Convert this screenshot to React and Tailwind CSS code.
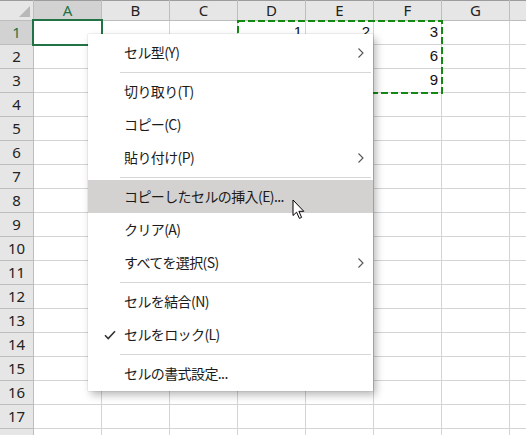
import { Fragment } from 'react'

const COLS = ['A', 'B', 'C', 'D', 'E', 'F', 'G', 'H']
const ROW_COUNT = 18

const DATA = {
  D1: 1, E1: 2, F1: 3,
  D2: 4, E2: 5, F2: 6,
  D3: 7, E3: 8, F3: 9,
}

const MENU = [
  { label: 'セル型(Y)', sub: true },
  'sep',
  { label: '切り取り(T)' },
  { label: 'コピー(C)' },
  { label: '貼り付け(P)', sub: true },
  'sep',
  { label: 'コピーしたセルの挿入(E)...', hover: true },
  { label: 'クリア(A)' },
  { label: 'すべてを選択(S)', sub: true },
  'sep',
  { label: 'セルを結合(N)' },
  { label: 'セルをロック(L)', checked: true },
  'sep',
  { label: 'セルの書式設定...' },
]

const uiFont = { fontFamily: '"Noto Sans", "Open Sans", sans-serif' }
const menuFont = { fontFamily: '"Noto Sans CJK JP", "Noto Sans", sans-serif' }

function Chevron() {
  return (
    <svg width="8" height="12" viewBox="0 0 8 12" className="text-[#555]">
      <path d="M1.5 1.5 L6 6 L1.5 10.5" fill="none" stroke="currentColor" strokeWidth="1.1" />
    </svg>
  )
}

function Check() {
  return (
    <svg width="12" height="10" viewBox="0 0 12 10" className="text-[#333]">
      <path d="M1 5.2 L4.2 8.5 L11 1.2" fill="none" stroke="currentColor" strokeWidth="1.6" />
    </svg>
  )
}

function ContextMenu() {
  return (
    <div
      className="absolute left-[88px] top-[34px] w-[285px] h-[357px] bg-white pt-[2px] pb-[1px] shadow-[0_0_1px_rgba(0,0,0,0.25),3px_4px_8px_rgba(0,0,0,0.28)] text-[14px] text-[#1b1b1b]"
      style={menuFont}
    >
      {MENU.map((item, i) => {
        if (item === 'sep') {
          return (
            <div key={i} className="h-[6px] flex items-center pl-[32px] pr-[2px]">
              <div className="h-px w-full bg-[#d7d7d7]" />
            </div>
          )
        }
        return (
          <div
            key={i}
            className={
              'h-[33px] flex items-center' + (item.hover ? ' bg-[#d3d2d0]' : '')
            }
          >
            <div className="w-[36px] flex justify-center pl-[8px]">{item.checked && <Check />}</div>
            <div className="flex-1 whitespace-nowrap tracking-[-0.6px]">{item.label}</div>
            <div className="w-[24px] flex justify-center">{item.sub && <Chevron />}</div>
          </div>
        )
      })}
    </div>
  )
}

function Cursor() {
  return (
    <svg className="absolute left-[292px] top-[199px]" width="14" height="21" viewBox="0 0 14 21">
      <path
        d="M1 1 L1 16.5 L4.6 13.2 L7.4 19.4 L9.6 18.4 L6.9 12.3 L11.8 12.3 Z"
        fill="#fff"
        stroke="#000"
        strokeWidth="1"
        strokeLinejoin="round"
      />
    </svg>
  )
}

function Marquee() {
  // copy marquee around D1:F3
  return (
    <svg className="absolute left-[237px] top-[20px]" width="206" height="74" viewBox="0 0 206 74">
      <rect x="1" y="1" width="204" height="72" fill="none" stroke="#128a12" strokeWidth="2" strokeDasharray="7 3" />
    </svg>
  )
}

export default function App() {
  const rows = Array.from({ length: ROW_COUNT }, (_, i) => i + 1)

  return (
    <div className="relative w-[526px] h-[435px] overflow-hidden bg-white" style={uiFont}>
      <div className="grid grid-cols-[34px_repeat(8,68px)] grid-rows-[21px_repeat(18,24px)] text-[15px] text-[#222]">
        {/* corner */}
        <div className="relative bg-[#e6e6e6] border-r border-b border-[#bdbdbd] shadow-[inset_0_1px_0_#9c9c9c]">
          <div className="absolute right-[3px] bottom-[3px] w-0 h-0 border-l-[11px] border-l-transparent border-b-[11px] border-b-[#b8b8b8]" />
        </div>
        {COLS.map((c) => (
          <div
            key={c}
            className={
              'flex items-center justify-center border-r border-b border-[#bdbdbd] shadow-[inset_0_1px_0_#9c9c9c] ' +
              (c === 'A' ? 'bg-[#d2d2d2] text-[#217346]' : 'bg-[#e6e6e6]')
            }
          >
            {c === 'H' ? '' : c}
          </div>
        ))}
        {rows.map((r) => (
          <Fragment key={r}>
            <div
              className={
                'flex items-center justify-center border-r border-b border-[#bdbdbd] ' +
                (r === 1 ? 'bg-[#d2d2d2] text-[#217346]' : 'bg-[#e6e6e6]')
              }
            >
              {r < ROW_COUNT ? r : ''}
            </div>
            {COLS.map((c) => (
              <div
                key={c}
                className="flex items-center justify-end pr-[3px] border-r border-b border-[#d4d4d4] text-[#111]"
                style={{ fontFamily: '"Liberation Sans", Arial, sans-serif' }}
              >
                {DATA[c + r] ?? ''}
              </div>
            ))}
          </Fragment>
        ))}
      </div>

      {/* active cell A1 */}
      <div className="absolute left-[32px] top-[19px] w-[71px] h-[27px] border-2 border-[#217346]" />

      <Marquee />
      <ContextMenu />
      <Cursor />
    </div>
  )
}
